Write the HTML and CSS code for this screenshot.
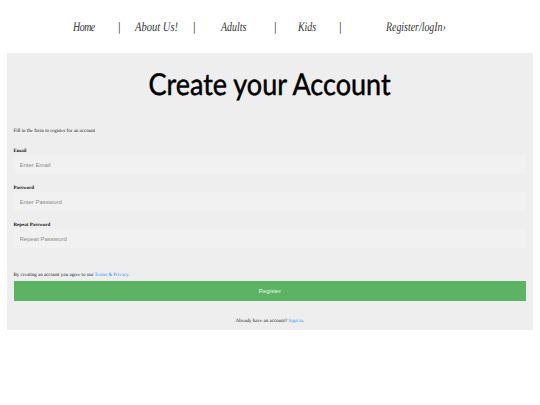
FILE: index.html
```html
<!DOCTYPE html>
<html lang="en">
<head>
    <meta charset="UTF-8">
    <meta name="viewport" content="width=device-width, initial-scale=1.0">
    <title>Create your Account</title>
    <link rel="stylesheet" href="styles.css">
</head>
<body>
    <nav class="nav">
        <a class="nav-link nav-home" href="#">Home</a>
        <span class="nav-sep sep-home">|</span>
        <a class="nav-link nav-about" href="#">About Us!</a>
        <span class="nav-sep sep-about">|</span>
        <a class="nav-link nav-adults" href="#">Adults</a>
        <span class="nav-sep sep-adults">|</span>
        <a class="nav-link nav-kids" href="#">Kids</a>
        <span class="nav-sep sep-kids">|</span>
        <a class="nav-link nav-register" href="#">Register/logIn&rsaquo;</a>
    </nav>

    <form class="panel">
        <h1 class="title"><span class="title-text">Create your Account</span></h1>
        <p class="intro">Fill in the form to register for an account</p>

        <label class="field-label" for="email">Email</label>
        <input class="field" type="text" id="email" placeholder="Enter Email">

        <label class="field-label" for="psw">Password</label>
        <input class="field" type="password" id="psw" placeholder="Enter Password">

        <label class="field-label" for="psw-repeat">Repeat Password</label>
        <input class="field" type="password" id="psw-repeat" placeholder="Repeat Password">

        <p class="terms">By creating an account you agree to our <a href="#">Terms &amp; Privacy</a>.</p>
        <button class="register-btn" type="submit">Register</button>
        <p class="signin">Already have an account? <a href="#">Sign in</a>.</p>
    </form>
</body>
</html>
```

FILE: styles.css
```css
body {
    margin: 0;
    font-family: "Liberation Serif", serif;
    text-rendering: geometricPrecision;
    background-color: #fff;
}
a {
    color: dodgerblue;
    text-decoration: none;
}

/* Top navigation */
.nav {
    display: flex;
    align-items: center;
    height: 53px;
    padding-left: 73px;
    font-family: "Liberation Serif", serif;
    font-style: italic;
    font-size: 13px;
}
.nav-link {
    color: #333;
    white-space: nowrap;
    transform: scaleX(0.76);
    transform-origin: left center;
}
.nav-sep {
    color: #333;
    font-style: normal;
    font-size: 13px;
}
.nav-home { width: 45px; letter-spacing: -0.6px; }
.sep-home { width: 17px; }
.nav-about { width: 58px; transform: scaleX(0.81); }
.sep-about { width: 28px; }
.nav-adults { width: 53px; }
.sep-adults { width: 24px; }
.nav-kids { width: 41px; }
.sep-kids { width: 47px; }

/* Form panel */
.panel {
    display: block;
    margin: 0 7px;
    height: 277px;
    padding: 0 7px 0 6.5px;
    background-color: #eee;
    box-sizing: border-box;
}
.title {
    margin: 0;
    padding-top: 13px;
    height: 62px;
    box-sizing: border-box;
    text-align: center;
    font-family: "Lato", sans-serif;
    font-size: 30px;
    font-weight: 400;
    color: #000;
}
.title-text {
    display: inline-block;
    transform: scaleX(0.9);
    -webkit-text-stroke: 0.5px #000;
}
.intro {
    margin: 14px 0 14px;
    font-size: 5px;
    line-height: 6px;
    color: #111;
}
.field-label {
    display: block;
    font-size: 5px;
    line-height: 6px;
    font-weight: bold;
    color: #111;
}
.field {
    display: block;
    width: 100%;
    height: 19px;
    margin: 0 0 12px;
    padding: 0 6px;
    box-sizing: border-box;
    border: none;
    background-color: #f1f1f1;
    font-family: "Liberation Sans", sans-serif;
    font-size: 6px;
}
.field::placeholder {
    color: #8c8c8c;
}
.terms {
    margin: 25px 0 2px;
    font-size: 5px;
    line-height: 6px;
    color: #111;
}
.register-btn {
    display: block;
    width: 100%;
    height: 20px;
    border: none;
    background-color: #5cb364;
    color: #e8f3e8;
    font-family: "Liberation Sans", sans-serif;
    font-size: 6px;
}
.signin {
    margin: 18px 0 0;
    text-align: center;
    font-size: 5px;
    line-height: 6px;
    color: #111;
}
```
